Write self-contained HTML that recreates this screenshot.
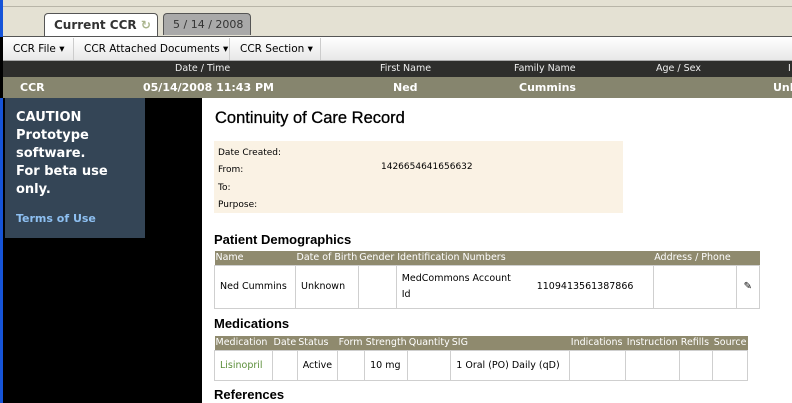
<!DOCTYPE html>
<html><head><style>
*{margin:0;padding:0;box-sizing:border-box}
body{width:792px;height:403px;overflow:hidden;background:#000;font-family:"DejaVu Sans",Verdana,sans-serif;position:relative}
.a{position:absolute}
.t{font-size:10px;color:#000;white-space:nowrap}
table{border-collapse:collapse;position:absolute;font-size:9.5px}
td{border:1px solid #cfcfcf;padding:0 5px;white-space:nowrap}
tr.h td{background:#8f8a6e;color:#fff;border:none;padding:0 1px;height:14px}
</style></head><body>
<div class="a" style="left:0;top:0;width:792px;height:37px;background:#e4e1d3;border-left:3px solid #1654d8"></div>
<div class="a" style="left:3px;top:6px;width:789px;height:1px;background:#b8b5a8"></div>
<div class="a" style="left:44px;top:13px;width:114px;height:25px;background:#fff;border:1px solid #555;border-bottom:none;border-radius:4px 4px 0 0"></div>
<div class="a t" style="left:54px;top:18px;font-size:12px;font-weight:bold;color:#333">Current CCR <span style="color:#a9b48c">&#x21bb;</span></div>
<div class="a" style="left:163px;top:13px;width:88px;height:22px;background:#a9a9a9;border:1px solid #555;border-bottom:none;border-radius:4px 4px 0 0"></div>
<div class="a t" style="left:173px;top:18px;font-size:11px;color:#333">5 / 14 / 2008</div>
<div class="a" style="left:3px;top:36px;width:789px;height:1px;background:#555"></div>
<div class="a" style="left:3px;top:37px;width:789px;height:24px;background:linear-gradient(#fff,#e8e8e8);border-bottom:1px solid #aaa"></div>
<div class="a t" style="left:13px;top:43px;font-size:10.5px">CCR File ▾</div>
<div class="a" style="left:73px;top:38px;width:1px;height:22px;background:#ccc"></div>
<div class="a t" style="left:84px;top:43px;font-size:10.5px">CCR Attached Documents ▾</div>
<div class="a" style="left:229px;top:38px;width:1px;height:22px;background:#ccc"></div>
<div class="a t" style="left:240px;top:43px;font-size:10.5px">CCR Section ▾</div>
<div class="a" style="left:320px;top:38px;width:1px;height:22px;background:#ccc"></div>
<div class="a" style="left:3px;top:61px;width:789px;height:16px;background:#2e2e2c"></div>
<div class="a t" style="left:175px;top:63px;color:#eee;font-size:9.5px">Date / Time</div>
<div class="a t" style="left:380px;top:63px;color:#eee;font-size:9.5px">First Name</div>
<div class="a t" style="left:514px;top:63px;color:#eee;font-size:9.5px">Family Name</div>
<div class="a t" style="left:656px;top:63px;color:#eee;font-size:9.5px">Age / Sex</div>
<div class="a t" style="left:788px;top:63px;color:#eee;font-size:9.5px">I</div>
<div class="a" style="left:3px;top:77px;width:789px;height:21px;background:#86856e"></div>
<div class="a t" style="left:20px;top:81px;color:#fff;font-weight:bold;font-size:11px">CCR</div>
<div class="a t" style="left:143px;top:81px;color:#fff;font-weight:bold;font-size:11px">05/14/2008 11:43 PM</div>
<div class="a t" style="left:393px;top:81px;color:#fff;font-weight:bold;font-size:11px">Ned</div>
<div class="a t" style="left:519px;top:81px;color:#fff;font-weight:bold;font-size:11px">Cummins</div>
<div class="a t" style="left:773px;top:81px;color:#fff;font-weight:bold;font-size:11px">Unk</div>
<div class="a" style="left:0;top:98px;width:3px;height:305px;background:#1654d8"></div>
<div class="a" style="left:5px;top:98px;width:140px;height:140px;background:#344556"></div>
<div class="a" style="left:16px;top:109px;color:#fff;font-weight:bold;font-size:13px;line-height:18px">CAUTION<br>Prototype<br>software.<br>For beta use<br>only.</div>
<div class="a t" style="left:16px;top:212px;color:#8ec0f2;font-weight:bold;font-size:11px">Terms of Use</div>
<div class="a" style="left:202px;top:98px;width:590px;height:305px;background:#fff"></div>
<div class="a t" style="left:215px;top:109px;font-family:'Liberation Sans',sans-serif;font-size:16.5px;-webkit-text-stroke:0.3px #000">Continuity of Care Record</div>
<div class="a" style="left:214px;top:141px;width:409px;height:72px;background:#faf2e4"></div>
<div class="a t" style="left:218px;top:145px;font-size:9px;line-height:17.3px">Date Created:<br>From:<br>To:<br>Purpose:</div>
<div class="a t" style="left:381px;top:162px;font-size:9px">1426654641656632</div>
<div class="a t" style="left:214px;top:232px;font-weight:bold;font-size:13px;font-family:'Liberation Sans',sans-serif">Patient Demographics</div>
<table style="left:214px;top:251px;width:546px">
<tr class="h"><td style="width:81px">Name</td><td style="width:62px">Date of Birth</td><td style="width:38px">Gender</td><td style="width:257px">Identification Numbers</td><td style="width:83px">Address / Phone</td><td></td></tr>
<tr style="height:43px"><td>Ned Cummins</td><td>Unknown</td><td></td><td><div style="display:flex;align-items:center"><span style="width:135px;line-height:16px">MedCommons Account<br>Id</span><span>1109413561387866</span></div></td><td></td><td style="text-align:center;font-size:10px">&#x270e;</td></tr>
</table>
<div class="a t" style="left:214px;top:316px;font-weight:bold;font-size:13px;font-family:'Liberation Sans',sans-serif">Medications</div>
<table style="left:214px;top:336px;width:534px">
<tr class="h"><td style="width:58px">Medication</td><td style="width:23px">Date</td><td style="width:40px">Status</td><td style="width:27px">Form</td><td style="width:43px">Strength</td><td style="width:43px">Quantity</td><td style="width:119px">SIG</td><td style="width:56px">Indications</td><td style="width:54px">Instruction</td><td style="width:33px">Refills</td><td>Source</td></tr>
<tr style="height:30px"><td style="color:#5c8f3a">Lisinopril</td><td></td><td>Active</td><td></td><td>10 mg</td><td></td><td>1 Oral (PO) Daily (qD)</td><td></td><td></td><td></td><td></td></tr>
</table>
<div class="a t" style="left:214px;top:387px;font-weight:bold;font-size:13px;font-family:'Liberation Sans',sans-serif">References</div>
</body></html>
